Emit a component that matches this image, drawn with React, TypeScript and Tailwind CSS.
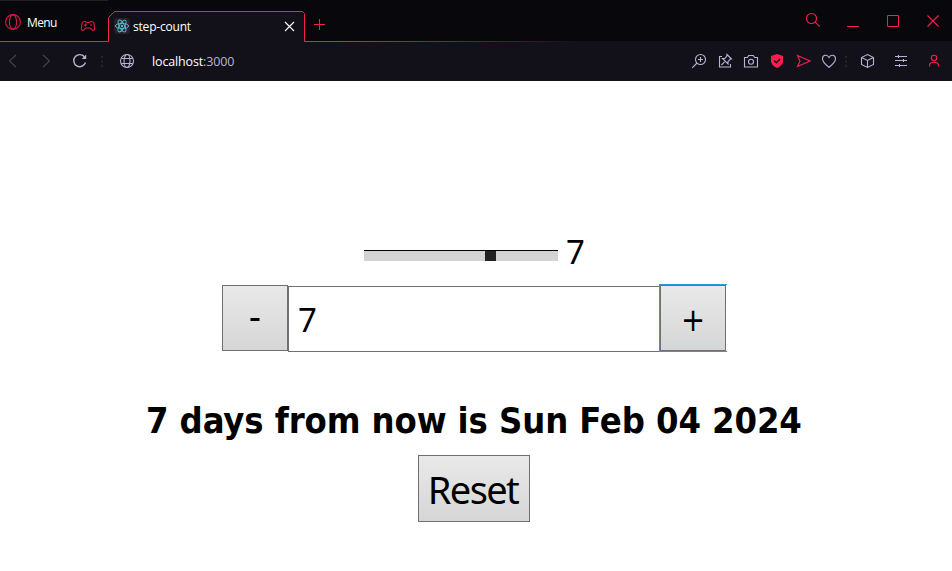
import React from "react";

const ui = "font-['Open_Sans','Noto_Sans',sans-serif]";
const tahoma = "font-['DejaVu_Sans_Condensed','DejaVu_Sans',sans-serif]";

function Icon({ className = "", children, box = 16 }: { className?: string; children: React.ReactNode; box?: number }) {
  return (
    <svg viewBox={`0 0 ${box} ${box}`} width={box} height={box} fill="none" stroke="currentColor" strokeWidth="1.1" className={`shrink-0 ${className}`}>
      {children}
    </svg>
  );
}

function TabStrip() {
  return (
    <div className="flex h-[42px] bg-[#08080c]">
      <div className="flex w-[108px] shrink-0 items-start border-b border-t border-b-[#fa1e4e] border-t-[#202024] pl-[5px] text-[#d91a45]">
        <Icon className="mt-[13px]">
          <circle cx="8" cy="8" r="7.4" />
          <ellipse cx="8" cy="8" rx="3.6" ry="7.2" />
        </Icon>
        <span className="ml-[6px] mt-[13px] w-[53px] text-[12px] leading-[18px] tracking-[-0.6px] text-white">Menu</span>
        <Icon className="mt-[17px]">
          <path d="M4 3.5h1.5l1 1h3l1-1H12c1.3 0 1.8 1 2 2.2l.6 4.2c.4 2.6-1.3 3.2-2.7 1.7L10.2 10H5.8l-1.700 1.600c-1.400 1.500-3.100.9-2.700-1.700L2 5.700c.2-1.200.7-2.200 2-2.200Z" />
          <path d="M4 7h3M5.500 5.500v3M10 7h2" />
        </Icon>
      </div>
      <div className="relative flex w-[197px] shrink-0 bg-[#12111a] pt-[11px]">
        <svg width="197" height="42" className="absolute left-0 top-0" fill="none">
          <path d="M0 0h197v14L195 11H7L0 17Z" fill="#08080c" />
          <path d="M0 41.500H.5V17.500l6-6H194.500l2 2V42" stroke="#fa1e4e" />
        </svg>
        <div className="relative ml-[6px] mt-[7px] flex h-4 w-4 shrink-0 items-center justify-center rounded-sm bg-[#242426] text-[#58bed8]">
          <Icon>
            <g strokeWidth="0.9">
              <ellipse cx="8" cy="8" rx="6.6" ry="2.6" />
              <ellipse cx="8" cy="8" rx="6.6" ry="2.6" transform="rotate(60 8 8)" />
              <ellipse cx="8" cy="8" rx="6.6" ry="2.6" transform="rotate(120 8 8)" />
            </g>
            <circle cx="8" cy="8" r="1.2" fill="currentColor" stroke="none" />
          </Icon>
        </div>
        <span className="ml-[3px] mt-[7px] w-[151px] text-[12px] leading-[18px] tracking-[-0.2px] text-white">step-count</span>
        <Icon box={11} className="mt-[10px] text-white">
          <path d="M1 1l9 9M10 1l-9 9" />
        </Icon>
      </div>
      <div className="flex flex-1 flex-col text-[#fa1e4e]">
        <div className="flex h-[41px] items-start">
          <Icon box={11} className="ml-[9px] mt-[19px]">
            <path d="M5.500 0v11M0 5.500h11" strokeWidth="1" />
          </Icon>
          <div className="ml-auto flex pr-[13px]">
            <Icon className="mr-[26px] mt-[12px]">
              <circle cx="6.500" cy="6.500" r="5" />
              <path d="M10.200 10.200l4.500 4.500" />
            </Icon>
            <Icon box={12} className="mr-[28px] mt-[15px]">
              <path d="M0 11.500h12" strokeWidth="1" />
            </Icon>
            <Icon box={12} className="mr-[28px] mt-[15px]">
              <path d="M.5 .5h11v11H.5Z" strokeWidth="1" />
            </Icon>
            <Icon box={12} className="mt-[15px]">
              <path d="M.5 .5l11 11M11.500 .5l-11 11" />
            </Icon>
          </div>
        </div>
        <div className="h-px w-full bg-linear-to-r from-[#fa1e4e] to-[#12111a] to-[42%]" />
      </div>
    </div>
  );
}

function Dots({ className = "" }: { className?: string }) {
  return (
    <Icon box={16} className={`text-[#242230] ${className}`}>
      <path d="M8 3v2M8 7.500v2M8 12v2" strokeWidth="2" />
    </Icon>
  );
}

function AddressBar() {
  return (
    <div className="flex h-[39px] items-center bg-[#12111a] pb-px text-[#b9b2d3]">
      <div className="flex w-[152px] items-center pl-[5px]">
        <Icon className="mr-[17px] text-[#44424f]"><path d="M11 2L4.500 8l6.500 6" /></Icon>
        <Icon className="mr-[18px] text-[#44424f]"><path d="M5 2l6.500 6L5 14" /></Icon>
        <Icon className="mr-[6px]">
          <path d="M13.500 9.500A6 6 0 1 1 12.700 4.200" strokeWidth="1.400" />
          <path d="M14.200 1.500v4.500H9.700Z" fill="currentColor" stroke="none" />
        </Icon>
        <Dots />
        <Icon className="ml-[9px]">
          <circle cx="8" cy="8" r="6.500" />
          <ellipse cx="8" cy="8" rx="3" ry="6.500" />
          <path d="M2.500 5.500h11M2.500 10.500h11" />
        </Icon>
      </div>
      <span className="mt-px text-[12.500px] leading-[18px] tracking-[-0.150px]"><span className="text-white">localhost</span>:3000</span>
      <div className="ml-auto flex items-center pr-[10px]">
        <Icon className="mr-[10px]">
          <circle cx="9.500" cy="6.500" r="5" />
          <path d="M6 10l-4.800 4.800M9.500 4v5M7 6.500h5" />
        </Icon>
        <Icon className="mr-[10px]">
          <path d="M5 3.500H2.500v10.500h11V11M4.500 12l3-3.200M10 1.500l4.500 4.500-1.300.3-2.200 2.300v2.400L5.500 5.500h2.300L9.800 3Z" />
        </Icon>
        <Icon className="mr-[10px]">
          <path d="M1.500 4.500h3l1.200-2h4.600l1.200 2h3v9.500h-13Z" />
          <circle cx="8" cy="8.700" r="2.500" />
        </Icon>
        <Icon className="mr-[10px] text-[#fa1e4e]">
          <path d="M8 1l6 2v5c0 3-2.500 5.500-6 7-3.500-1.500-6-4-6-7V3Z" fill="currentColor" stroke="none" />
          <path d="M5 7.500l2.300 2.300L11 6" stroke="#12111a" strokeWidth="1.400" />
        </Icon>
        <Icon className="mr-[10px] text-[#fa1e4e]">
          <path d="M2.500 2.500L15 8 2.500 13.500 5 8Z" />
        </Icon>
        <Icon><path d="M8 14.300C5 12 1.500 9.500 1.500 5.800 1.500 1.900 6.200.800 8 4.500c1.800-3.700 6.500-2.600 6.500 1.300C14.500 9.500 11 12 8 14.300Z" /></Icon>
        <Dots className="ml-px" />
        <Icon className="ml-[5px] mr-[18px]">
          <path d="M8.500 1.500l6 3v7l-6 3-6-3v-7ZM2.500 4.500l6 3 6-3M8.500 7.500v7" />
        </Icon>
        <Icon className="mr-[17px]"><path d="M2 3.500h12M2 7.500h12M2 12.500h12M5.500 2v3M10.500 6v3M6.500 11v3" strokeWidth="1" /></Icon>
        <Icon className="text-[#fa1e4e]">
          <circle cx="8" cy="5" r="2.700" />
          <path d="M3.500 13.500v-1c0-2.200 1.800-3.200 4.500-3.200s4.500 1 4.500 3.200v1" />
        </Icon>
      </div>
    </div>
  );
}

export default function App() {
  const button = "flex shrink-0 items-center justify-center border border-[#707070] bg-linear-to-b from-[#e9e9e9] to-[#d6d6d6]";
  return (
    <div className={`flex h-[571px] w-[952px] flex-col overflow-hidden bg-white ${ui}`}>
      <TabStrip />
      <AddressBar />
      <main className={`flex flex-1 flex-col text-black ${tahoma}`}>
        <div className="ml-[364px] mt-[149px] flex h-10 items-start">
          <div className="mt-[20px] h-[11px] w-[194px] border-t border-black bg-[#d3d3d3]">
            <div className="ml-[121px] h-[10px] w-[11px] bg-[#222222]" />
          </div>
          <span className="ml-[8px] font-['Noto_Sans',sans-serif] text-[33px] leading-[44px]">7</span>
        </div>
        <div className="ml-[222px] mt-[14px] flex h-[68px] items-start">
          <button className={`${button} mt-[1px] h-[66px] w-[66px] pb-[1px] text-[38px]`}>-</button>
          <input defaultValue="7" className="mt-[2px] h-[66px] w-[371px] border border-r-0 border-[#707070] px-[9px] pt-px font-['Noto_Sans',sans-serif] text-[33px] outline-none" />
          <div className="flex h-[68px] w-[68px] border-y border-l border-[#26a0da]">
            <button className={`${button} h-[66px] w-[66px] pt-[3px] text-[32px]`}>+</button>
          </div>
        </div>
        <h2 className="ml-[146px] mt-[45px] h-[48px] whitespace-nowrap text-[36px] font-bold leading-[48px] tracking-[-0.1px]">7 days from now is Sun Feb 04 2024</h2>
        <button className={`${button} ml-[418px] mt-[10px] h-[67px] w-[112px] pr-[2px] pt-[1px] font-['Noto_Sans',sans-serif] text-[38px] tracking-[-1.6px]`}>Reset</button>
      </main>
    </div>
  );
}
